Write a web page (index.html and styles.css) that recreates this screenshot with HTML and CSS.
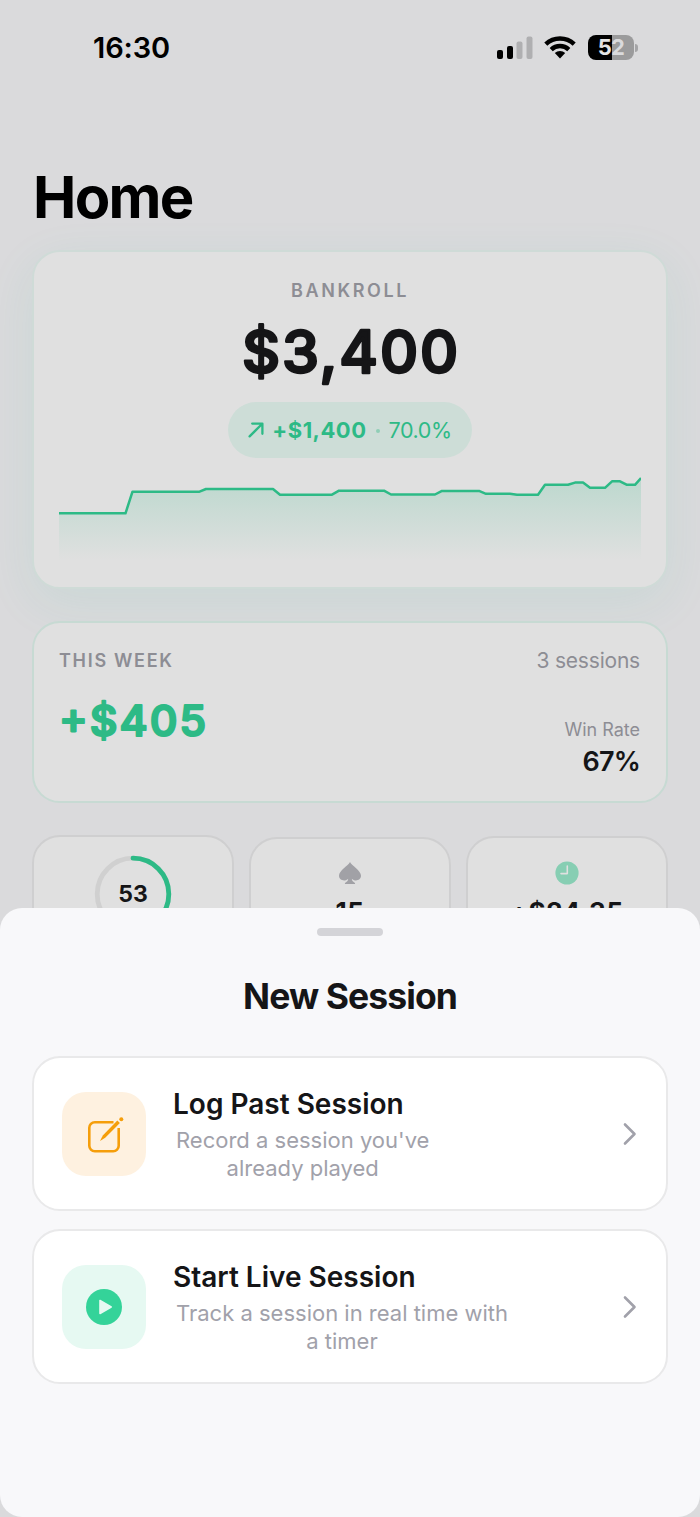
FILE: index.html
```html
<!DOCTYPE html>
<html lang="en">
  <head>
    <meta charset="UTF-8" />
    <meta name="viewport" content="width=device-width, initial-scale=1.0" />
    <title>Home</title>
    <link rel="stylesheet" href="styles.css">
  </head>
  <body>
    <div class="phone">
      <header class="status-bar">
        <span class="time">16:30</span>
        <div class="status-icons">
          <svg class="signal" width="36" height="24" viewBox="0 0 36 24">
            <rect x="0" y="14" width="6" height="9" rx="2" fill="#000" />
            <rect x="10" y="10" width="6" height="13" rx="2" fill="#000" />
            <rect x="19.5" y="5.5" width="6" height="17.5" rx="2" fill="#afafb1" />
            <rect x="29.5" y="0.5" width="6" height="22.5" rx="2" fill="#afafb1" />
          </svg>
          <svg class="wifi" width="32" height="24" viewBox="0 0 32 24">
            <g fill="none" stroke="#000" stroke-width="4.4">
              <path d="M1.8 8.2a20.5 20.5 0 0 1 28.4 0" />
              <path d="M7.2 13.6a12.6 12.6 0 0 1 17.6 0" />
            </g>
            <path d="M16 22.6l-5.2-5.5a7.600 7.600 0 0 1 10.400 0z" fill="#000" />
          </svg>
          <div class="battery">
            <div class="battery-body"><span>5</span><span class="empty">2</span></div>
            <div class="battery-cap"></div>
          </div>
        </div>
      </header>

      <main class="home">
        <h1>Home</h1>

        <section class="card bankroll">
          <h2 class="label wide">BANKROLL</h2>
          <svg class="amount" width="240" height="70" viewBox="0 0 240 70">
            <text x="120" y="56" text-anchor="middle" textLength="216">$3,400</text>
          </svg>
          <div class="pill">
            <svg width="16" height="16" viewBox="0 0 16 16">
              <path d="M1.6 14.4L14 2M4.2 1.6h10.2v10.2" fill="none" stroke="#2dba86" stroke-width="2.3" stroke-linecap="round" stroke-linejoin="round" />
            </svg>
            <strong>+$1,400</strong>
            <i class="dot"></i>
            <span class="percent">70.0%</span>
          </div>
          <svg class="chart" width="582" height="84" viewBox="0 0 582 84">
            <defs>
              <linearGradient id="fade" x1="0" y1="0" x2="0" y2="1">
                <stop offset="0" stop-color="#2dba86" stop-opacity="0.2" />
                <stop offset="1" stop-color="#2dba86" stop-opacity="0" />
              </linearGradient>
            </defs>
            <path fill="url(#fade)" d="M0 36.3H66.5L73.5 14.7H140.5L147 12H214L221 17.7H273L280 13.7H325L332 17.5H376L383 13.9H420L427 16.8H451L458 17.7H479L486 7.8H509L516 5.6H524L531 10.8H546L553 4.3H561L568 7.8H576L582 1V84H0z" />
            <path fill="none" stroke="#2dba86" stroke-width="2.5" stroke-linejoin="round" d="M0 36.3H66.5L73.5 14.7H140.5L147 12H214L221 17.7H273L280 13.7H325L332 17.5H376L383 13.9H420L427 16.8H451L458 17.7H479L486 7.8H509L516 5.6H524L531 10.8H546L553 4.3H561L568 7.8H576L582 1" />
          </svg>
        </section>

        <section class="card week">
          <div class="week-left">
            <h2 class="label">THIS WEEK</h2>
            <svg class="profit" width="160" height="56" viewBox="0 0 160 56">
              <text x="0" y="43" textLength="147">+$405</text>
            </svg>
          </div>
          <div class="week-right">
            <div class="sessions">3 sessions</div>
            <div class="rate-label">Win Rate</div>
            <div class="rate">67%</div>
          </div>
        </section>

        <section class="stats">
          <div class="stat score">
            <svg class="ring" width="78" height="78" viewBox="0 0 78 78">
              <circle cx="39" cy="39" r="35.8" fill="none" stroke="#d0d0d0" stroke-width="4.8" />
              <circle cx="39" cy="39" r="35.8" fill="none" stroke="#2dba86" stroke-width="4.8" stroke-linecap="round" pathLength="100" stroke-dasharray="53 100" transform="rotate(-90 39 39)" />
            </svg>
            <span class="score-value">53</span>
          </div>
          <div class="stat count">
            <svg width="24" height="24" viewBox="0 0 24 24">
              <path fill="#a1a1a6" d="M12 1C10.3 4.6 1 9.5 1 14.8c0 4.8 6.3 6.1 9.2 2.9-.1 2.1-1.5 3.2-2.9 4-.8.5-.5 1.3.3 1.3h8.8c.8 0 1.1-.8.3-1.3-1.4-.8-2.8-1.9-2.9-4 2.9 3.2 9.2 1.9 9.2-2.9C23 9.5 13.7 4.6 12 1z" />
            </svg>
            <strong>15</strong>
          </div>
          <div class="stat hourly">
            <svg width="24" height="24" viewBox="0 0 24 24">
              <circle cx="12" cy="12" r="11.6" fill="#87ceb3" />
              <path d="M12.3 5v7.6H6" fill="none" stroke="#e0e0e0" stroke-width="1.6" stroke-linecap="round" stroke-linejoin="round" />
            </svg>
            <strong>+$24.35</strong>
          </div>
        </section>
      </main>

      <div class="sheet">
        <div class="handle"></div>
        <h2 class="sheet-title">New Session</h2>

        <button class="option">
          <span class="tile tile-orange">
            <svg width="40" height="40" viewBox="0 0 40 40">
              <path d="M29.5 8.3H10.8a5.5 5.5 0 0 0-5.5 5.500v17.900a5.500 5.500 0 0 0 5.500 5.500h18.400a5.500 5.500 0 0 0 5.500-5.500V14" fill="none" stroke="#f59e0b" stroke-width="2.600" />
              <path d="M33.300 6.500L35.900 9.100 21.200 23.800 16 27l2.800-5.500z" fill="#f59e0b" />
              <circle cx="37.300" cy="5.200" r="2" fill="#f59e0b" />
            </svg>
          </span>
          <span class="text">
            <span class="option-title">Log Past Session</span>
            <span class="option-desc">Record a session you've<br />already played</span>
          </span>
          <svg class="chevron" width="14" height="24" viewBox="0 0 14 24">
            <path d="M2 2.500l9.500 9.500L2 21.500" />
          </svg>
        </button>

        <button class="option">
          <span class="tile tile-green">
            <svg width="36" height="36" viewBox="0 0 36 36">
              <circle cx="18" cy="18" r="18" fill="#34d399" />
              <path d="M14 11.500v13l11.200-6.500z" fill="#e6f9f2" stroke="#e6f9f2" stroke-width="1.600" stroke-linejoin="round" />
            </svg>
          </span>
          <span class="text">
            <span class="option-title">Start Live Session</span>
            <span class="option-desc">Track a session in real time with<br />a timer</span>
          </span>
          <svg class="chevron" width="14" height="24" viewBox="0 0 14 24">
            <path d="M2 2.500l9.500 9.500L2 21.500" />
          </svg>
        </button>
      </div>
    </div>
  </body>
</html>
```
FILE: styles.css
```css
* {
  margin: 0;
  padding: 0;
  box-sizing: border-box;
}

body {
  background-color: #dadadc;
  font-family: Inter, "Liberation Sans", sans-serif;
  color: #151517;
}

svg {
  display: block;
  flex: none;
}

.phone {
  position: relative;
  width: 700px;
  height: 1517px;
  overflow: hidden;
  background-color: #dadadc;
}

/* status bar */
.status-bar {
  display: flex;
  justify-content: space-between;
  align-items: center;
  height: 96px;
  padding: 0 62px 0 93px;
  color: #000;
}

.time {
  font-size: 29px;
  font-weight: 600;
  line-height: 40px;
  letter-spacing: -0.1px;
}

.status-icons {
  display: flex;
  align-items: center;
  margin-top: -1px;
}

.wifi {
  margin-left: 11px;
}

.battery {
  display: flex;
  align-items: center;
  margin-left: 12px;
}

.battery-body {
  display: flex;
  justify-content: center;
  width: 46px;
  height: 25px;
  border-radius: 8px;
  background: linear-gradient(to right, #000 24px, #9b9b9c 24px);
  color: #e4e4e5;
  font-size: 22px;
  font-weight: 700;
  line-height: 25px;
  letter-spacing: -0.6px;
}

.empty {
  color: #dadadc;
}

.battery-cap {
  width: 3px;
  height: 8px;
  margin-left: 1px;
  border-radius: 0 4px 4px 0;
  background-color: #a5a5a7;
}

/* home */
.home {
  padding: 66px 32px 0;
}

h1 {
  height: 88px;
  margin-left: 1px;
  font-size: 58px;
  font-weight: 700;
  line-height: 70px;
  letter-spacing: -1.7px;
  color: #000;
}

.card {
  border: 2px solid #c7dad3;
  border-radius: 28px;
  background-color: #e0e0e0;
}

.label {
  font-size: 18px;
  font-weight: 600;
  line-height: 24px;
  letter-spacing: 1.7px;
  color: #8d8d94;
}

.wide {
  letter-spacing: 2.6px;
}

.bankroll {
  display: flex;
  flex-direction: column;
  align-items: center;
  height: 339px;
  padding-top: 27px;
  border-color: #cfdbd7;
  box-shadow: 0 14px 50px rgba(45, 186, 150, 0.09);
}

.amount,
.profit {
  font-weight: 500;
  stroke-linejoin: round;
}

/* the round stroke softens the digits */
.amount {
  margin-top: 14px;
  font-size: 59px;
  fill: #151517;
  stroke: #151517;
  stroke-width: 2.6px;
}

.pill {
  display: flex;
  align-items: center;
  justify-content: center;
  width: 244px;
  height: 56px;
  margin-top: 15px;
  border-radius: 28px;
  background-color: #cdddd7;
  color: #2dba86;
  font-size: 22px;
}

.pill strong {
  margin-left: 8px;
  font-weight: 700;
  letter-spacing: 0.5px;
}

.percent {
  font-size: 21.5px;
  letter-spacing: -0.4px;
}

.dot {
  width: 4px;
  height: 4px;
  margin: 2px 9px 0;
  border-radius: 50%;
  background-color: #8fceb6;
}

.chart {
  margin-top: 19px;
}

.week {
  position: relative;
  display: flex;
  justify-content: space-between;
  height: 182px;
  margin-top: 32px;
  padding: 26px 26px 0 25px;
}

.profit {
  margin-top: 20px;
  font-size: 43px;
  fill: #2dba86;
  stroke: #2dba86;
  stroke-width: 2.2px;
}

.week-right {
  text-align: right;
  color: #8d8d94;
}

.sessions {
  font-size: 21px;
  line-height: 24px;
  letter-spacing: -0.2px;
}

.rate-label {
  margin-top: 45px;
  font-size: 18px;
  line-height: 24px;
}

.rate {
  margin-top: 4px;
  font-size: 27px;
  font-weight: 600;
  line-height: 32px;
  letter-spacing: -0.8px;
  color: #151517;
}

.stats {
  display: flex;
  align-items: flex-start;
  gap: 15px;
  margin-top: 32px;
}

.stat {
  display: flex;
  flex-direction: column;
  align-items: center;
  flex: 1;
  height: 160px;
  margin-top: 2px;
  padding-top: 22px;
  border: 2px solid #cfcfd0;
  border-radius: 28px;
  background-color: #e0e0e0;
}

.stat strong {
  margin-top: 12px;
  font-size: 26px;
  font-weight: 700;
  line-height: 30px;
  letter-spacing: 0.7px;
}

.score {
  display: grid;
  justify-items: center;
  align-items: start;
  margin-top: 0;
  padding-top: 18px;
}

.hourly {
  margin-top: 1px;
  padding-top: 23px;
}

.ring,
.score-value {
  grid-area: 1 / 1;
}

.score-value {
  font-size: 23px;
  font-weight: 700;
  line-height: 78px;
}

/* bottom sheet */
.sheet {
  position: absolute;
  left: 0;
  bottom: 0;
  display: flex;
  flex-direction: column;
  align-items: center;
  width: 100%;
  height: 609px;
  padding: 20px 32px 0;
  border-radius: 22px;
  background-color: #f8f8fa;
}

.handle {
  width: 66px;
  height: 8px;
  border-radius: 4px;
  background-color: #d4d4d8;
}

.sheet-title {
  margin: 38px 0 36px;
  font-size: 35.5px;
  font-weight: 700;
  line-height: 46px;
  letter-spacing: -0.9px;
}

.option {
  display: flex;
  align-items: center;
  width: 636px;
  height: 155px;
  margin-bottom: 18px;
  padding: 0 29px 0 28px;
  border: 2px solid #e9e9ea;
  border-radius: 28px;
  background-color: #fff;
  color: #151517;
  font-family: inherit;
}

.tile {
  display: flex;
  align-items: center;
  justify-content: center;
  width: 84px;
  height: 84px;
  border-radius: 24px;
}

.tile-orange {
  background-color: #fef1e0;
}

.tile-green {
  background-color: #e6f9f2;
}

.text {
  display: flex;
  flex-direction: column;
  align-items: flex-start;
  margin: 0 auto 0 27px;
}

.option-title {
  font-size: 28px;
  font-weight: 600;
  line-height: 36px;
}

.option-desc {
  margin: 4px 0 0 3px;
  font-size: 22px;
  line-height: 28px;
  text-align: center;
  color: #a1a1aa;
}

.chevron path {
  fill: none;
  stroke: #a1a1aa;
  stroke-width: 2.6px;
  stroke-linecap: round;
  stroke-linejoin: round;
}
```
